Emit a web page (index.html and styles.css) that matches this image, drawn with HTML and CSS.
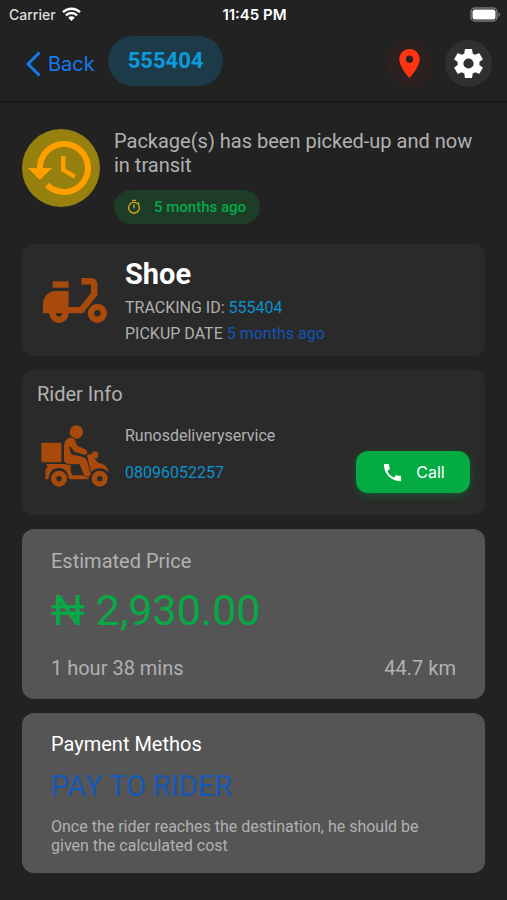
FILE: index.html
```html
<!DOCTYPE html>
<html lang="en">
<head>
<meta charset="utf-8">
<meta name="viewport" content="width=device-width, initial-scale=1">
<title>Package 555404</title>
<link rel="stylesheet" href="styles.css">
</head>
<body>
<div class="status">
  <div class="status-left">
    <span>Carrier</span>
    <svg class="wifi" viewBox="0 0 19 14" aria-hidden="true"><path d="M1 5.2a12.2 12.2 0 0 1 17 0M3.9 8.3a8 8 0 0 1 11.2 0" fill="none" stroke="currentColor" stroke-width="2.4"/><path d="M9.500 14 6.200 10.700a4.700 4.700 0 0 1 6.600 0z" fill="currentColor"/></svg>
  </div>
  <strong class="clock">11:45 PM</strong>
  <svg class="battery" viewBox="0 0 30 15" aria-hidden="true"><rect x="1" y="1" width="26" height="13" rx="4" fill="none" stroke="#777" stroke-width="1.500"/><rect x="2.500" y="2.500" width="23" height="10" rx="2.500" fill="#fff"/><path d="M28.500 5v5q1.500-1 1.500-2.500T28.500 5z" fill="#777"/></svg>
</div>
<header class="nav">
  <a class="back" href="#"><svg class="chevron" viewBox="0 0 16 26" aria-hidden="true"><path d="M14.500 1.500 3 13l11.500 11.500" fill="none" stroke="currentColor" stroke-width="3"/></svg><span>Back</span></a>
  <h1 class="code">555404</h1>
  <div class="actions">
    <button class="round pin" type="button" aria-label="Map"><svg viewBox="0 0 24 24"><path fill="currentColor" d="M12 2C8.130 2 5 5.130 5 9c0 5.250 7 13 7 13s7-7.750 7-13c0-3.870-3.130-7-7-7zm0 9.500a2.500 2.500 0 0 1 0-5 2.500 2.500 0 0 1 0 5z"/></svg></button>
    <button class="round gear" type="button" aria-label="Settings"><svg viewBox="0 0 24 24"><path fill="currentColor" d="M19.430 12.980c.04-.32.07-.64.07-.98s-.03-.66-.07-.98l2.110-1.650c.19-.15.24-.42.12-.64l-2-3.460c-.12-.22-.39-.3-.61-.22l-2.490 1c-.52-.4-1.080-.73-1.690-.98l-.38-2.650C14.460 2.180 14.250 2 14 2h-4c-.25 0-.46.18-.49.42l-.38 2.650c-.61.25-1.170.59-1.690.98l-2.490-1c-.23-.09-.49 0-.61.22l-2 3.460c-.13.22-.07.49.12.64l2.110 1.650c-.04.32-.07.65-.07.98s.03.66.07.98l-2.110 1.650c-.19.15-.24.42-.12.64l2 3.460c.12.22.39.3.61.22l2.490-1c.52.4 1.080.73 1.690.98l.38 2.650c.03.24.24.42.49.42h4c.25 0 .46-.18.49-.42l.38-2.650c.61-.25 1.170-.59 1.690-.98l2.490 1c.23.09.49 0 .61-.22l2-3.460c.12-.22.07-.49-.12-.64l-2.110-1.650zM12 15.500a3.500 3.500 0 1 1 0-7 3.500 3.500 0 0 1 0 7z"/></svg></button>
  </div>
</header>
<main class="content">
  <section class="progress">
    <div class="history"><svg viewBox="0 0 24 24" aria-hidden="true"><path fill="currentColor" d="M13 3c-4.970 0-9 4.030-9 9H1l3.890 3.890.07.14L9 12H6c0-3.870 3.130-7 7-7s7 3.130 7 7-3.130 7-7 7c-1.930 0-3.680-.79-4.940-2.060l-1.420 1.420C8.270 19.990 10.510 21 13 21c4.970 0 9-4.030 9-9s-4.030-9-9-9zm-1 5v5l4.280 2.540.72-1.210-3.500-2.080V8H12z"/></svg></div>
    <div>
      <p class="message">Package(s) has been picked-up and now in transit</p>
      <div class="age"><svg viewBox="0 0 24 24" aria-hidden="true"><path fill="currentColor" d="M15 1H9v2h6V1zm-4 13h2V8h-2v6zm8.030-6.610 1.420-1.420c-.43-.51-.9-.99-1.410-1.410l-1.420 1.420A8.960 8.960 0 0 0 12 4c-4.970 0-9 4.030-9 9s4.020 9 9 9 9-4.030 9-9c0-2.120-.74-4.070-1.970-5.610zM12 20c-3.870 0-7-3.130-7-7s3.130-7 7-7 7 3.130 7 7-3.130 7-7 7z"/></svg><span>5 months ago</span></div>
    </div>
  </section>
  <section class="card package">
    <svg class="scooter" viewBox="2 5 20 14" aria-hidden="true"><path fill="currentColor" fill-rule="evenodd" d="M19 7c0-1.100-.9-2-2-2h-3v2h3v2.650L13.520 14H10V9H6c-2.210 0-4 1.790-4 4v3h2c0 1.660 1.340 3 3 3s3-1.340 3-3h4.480L19 10.350V7zM7 17c-.55 0-1-.45-1-1h2c0 .55-.45 1-1 1zM5 6h5v2H5zM19 13a3 3 0 1 0 0 6 3 3 0 0 0 0-6zm0 4a1 1 0 1 1 0-2 1 1 0 0 1 0 2z"/></svg>
    <div>
      <h2 class="item">Shoe</h2>
      <p class="detail">TRACKING ID: <span class="cyan">555404</span></p>
      <p class="detail">PICKUP DATE <span class="blue">5 months ago</span></p>
    </div>
  </section>
  <section class="card rider">
    <h2 class="heading">Rider Info</h2>
    <div class="rider-row">
      <svg class="courier" viewBox="18 15 204 189" aria-hidden="true">
        <rect x="19" y="68" width="60" height="59" rx="3"/>
        <path d="M33 132h74v20l4 14h48q6 0 8-8l-11-54 10-2 24 26q22 4 30 22v6q-12-11-27-11-27 0-33 33h-58q-4-34-30-34-24 0-29 21l-3 13h-9V154q0-8 7-12z"/>
        <path d="m166 106 6-9q8-5 14-2 7 9 2 17-3 5-9 3l-7-3z"/>
        <g class="halo"><circle cx="72" cy="176" r="28"/><circle cx="194" cy="176" r="28"/></g>
        <g class="wheel"><circle cx="72" cy="176" r="16"/><circle cx="194" cy="176" r="16"/></g>
        <circle cx="124" cy="36" r="20"/>
        <path class="body" d="M87 82q0-29 21-29 11 0 15 16l5 9 23 10q9 6 4 14-4 4-12 1l-25-8-10-13q-7-6-5 1l6 20 26 6q18 2 22 16l10 35q0 10-9 10-8 0-11-6l-13-31-29-1q-20 0-18-16z"/>
      </svg>
      <div class="rider-text">
        <p>Runosdeliveryservice</p>
        <p class="cyan">08096052257</p>
      </div>
      <button class="call" type="button"><svg viewBox="0 0 24 24" aria-hidden="true"><path fill="currentColor" d="M6.620 10.790c1.440 2.830 3.760 5.140 6.590 6.590l2.200-2.200c.27-.27.67-.36 1.020-.24 1.120.37 2.330.57 3.570.57.55 0 1 .45 1 1V20c0 .55-.45 1-1 1-9.390 0-17-7.610-17-17 0-.55.45-1 1-1h3.500c.55 0 1 .45 1 1 0 1.250.2 2.450.57 3.570.11.35.03.74-.25 1.020l-2.200 2.200z"/></svg><span>Call</span></button>
    </div>
  </section>
  <section class="card light">
    <h2 class="heading">Estimated Price</h2>
    <p class="price">₦ 2,930.00</p>
    <div class="trip"><span>1 hour 38 mins</span><span>44.7 km</span></div>
  </section>
  <section class="card light payment">
    <h2 class="heading">Payment Methos</h2>
    <p class="method">PAY TO RIDER</p>
    <p class="note">Once the rider reaches the destination, he should be given the calculated cost</p>
  </section>
</main>
</body>
</html>
```
FILE: styles.css
```css
* { box-sizing: border-box; }
body, h1, h2, p { margin: 0; }
body { background: #222; color: #b1b1b1; font-family: Roboto, "Noto Sans", sans-serif; }
svg { display: block; flex-shrink: 0; }
button { border: 0; padding: 0; font: inherit; }
.status { display: grid; grid-template-columns: 1fr auto 1fr; align-items: center; height: 28px; padding: 0 7px 0 9px; color: #fff; font: 500 14px Inter, sans-serif; }
.status-left { display: flex; align-items: center; gap: 6px; color: #ddd; }
.wifi { width: 19px; height: 14px; color: #fff; }
.clock { font-size: 15px; font-weight: 600; }
.battery { width: 30px; height: 15px; justify-self: end; }
.nav { display: flex; align-items: center; height: 75px; padding: 0 15px 2px 25px; border-bottom: 2px solid #191919; }
.back { display: flex; align-items: center; gap: 7px; color: #1479ee; font: 20px Inter, sans-serif; text-decoration: none; }
.chevron { width: 16px; height: 26px; }
.code { align-self: flex-start; margin: 8px 0 0 13px; padding: 0 20px; border-radius: 25px; background: #1c3a48; color: #0c9bdc; font-size: 22px; font-weight: 700; line-height: 50px; }
.actions { display: flex; gap: 12px; margin-left: auto; }
.round { display: grid; place-items: center; width: 47px; height: 47px; border-radius: 50%; }
.round svg { width: 35px; height: 35px; }
.pin { background: #2d2020; color: #ff3512; }
.gear { background: #303030; color: #fff; }
.content { display: flex; flex-direction: column; gap: 14px; padding: 26px 22px; }
.progress { display: flex; gap: 14px; padding-bottom: 6px; }
.history { flex-shrink: 0; width: 78px; height: 78px; padding: 3px; border-radius: 50%; background: #96810f; color: #ff9f00; }
.message { font-size: 20px; line-height: 24px; }
.age { display: inline-flex; align-items: center; gap: 12px; height: 34px; margin-top: 13px; padding: 0 14px 0 12px; border-radius: 17px; background: #1d3d28; color: #05aa48; font-size: 15px; font-weight: 500; }
.age svg { width: 16px; height: 16px; color: #d3a321; }
.card { border-radius: 12px; background: #2a2a2a; }
.package { display: flex; align-items: center; gap: 18px; min-height: 112px; padding: 9px 21px; }
.scooter { width: 64px; height: 45px; color: #a74a0c; }
.item { margin-bottom: 1px; color: #fff; font-size: 29px; font-weight: 700; line-height: 40px; }
.detail { font-size: 16px; line-height: 26px; }
.cyan { color: #0b91cc; }
.blue { color: #1254b4; }
.heading { font-size: 20px; font-weight: 400; line-height: 24px; }
.rider { padding: 12px 15px 22px; }
.rider-row { display: flex; align-items: flex-start; gap: 16px; padding: 19px 0 0 4px; }
.courier { width: 68px; height: 63px; fill: #a74a0c; }
.halo { fill: #2a2a2a; }
.wheel { fill: none; stroke: #a74a0c; stroke-width: 16px; }
.body { stroke: #2a2a2a; stroke-width: 5px; paint-order: stroke; }
.rider-text { flex: 1; font-size: 16px; line-height: 22px; }
.rider-text .cyan { margin-top: 15px; }
.call { display: flex; align-items: center; justify-content: center; gap: 12px; width: 114px; height: 42px; margin-top: 26px; border-radius: 12px; background: #04aa42; box-shadow: 0 3px 8px #04aa4255; color: #fff; font: 16px Inter, sans-serif; }
.call svg { width: 23px; height: 23px; }
.light { padding: 20px 29px 18px; background: #555; }
.price { margin: 11px 0 19px; color: #07a846; font-size: 43px; line-height: 52px; }
.trip { display: flex; justify-content: space-between; font-size: 20px; line-height: 26px; }
.payment { padding-top: 19px; }
.payment .heading { color: #fff; }
.method { margin-top: 12px; color: #1458b8; font-size: 29px; line-height: 36px; }
.note { margin-top: 13px; font-size: 16px; line-height: 19px; }
```
